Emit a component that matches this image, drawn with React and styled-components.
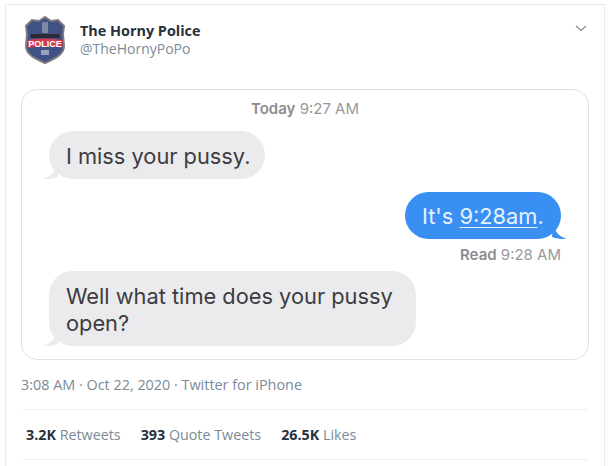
import React from "react";
import styled, { createGlobalStyle } from "styled-components";

const GlobalStyle = createGlobalStyle`
  html, body {
    margin: 0;
    padding: 0;
    background: #fff;
  }
`;

const Page = styled.div`
  width: 611px;
  height: 466px;
  box-sizing: border-box;
  padding: 4px 6px 0 5px;
  overflow: hidden;
  font-family: "Open Sans", "Noto Sans", sans-serif;
`;

const Frame = styled.div`
  height: 100%;
  box-sizing: border-box;
  border: 1px solid #e9ecee;
  border-bottom: none;
  padding: 0 15px 0 15px;
`;

const Header = styled.div`
  display: flex;
  align-items: flex-start;
  height: 84px;
  box-sizing: border-box;
  padding: 11px 0 0 4px;
`;

const Badge = styled.svg`
  width: 40px;
  height: 48px;
  flex: none;
`;

const Names = styled.div`
  margin: 5px 0 0 15px;
  flex: 1;
`;

const Name = styled.div`
  font-size: 14.4px;
  line-height: 19px;
  font-weight: 700;
  color: #27313c;
`;

const Handle = styled.div`
  font-size: 14px;
  line-height: 18px;
  color: #7c8b98;
`;

const Caret = styled.svg`
  width: 14px;
  height: 10px;
  margin: 7px 1px 0 0;
  flex: none;
`;

const Card = styled.div`
  height: 271px;
  box-sizing: border-box;
  border: 1px solid #dfe2e5;
  border-radius: 16px;
  padding: 9px 27px 0 27px;
  font-family: Inter, "Liberation Sans", sans-serif;
`;

const Stamp = styled.div`
  text-align: ${({ $align }) => $align};
  margin-top: ${({ $top }) => $top || 0}px;
  font-size: 15px;
  line-height: 20px;
  color: #98989d;
  b {
    font-weight: 600;
    color: #8b8b90;
  }
`;

const Row = styled.div`
  display: flex;
  justify-content: ${({ $mine }) => ($mine ? "flex-end" : "flex-start")};
  margin-top: ${({ $top }) => $top}px;
`;

const Bubble = styled.div`
  position: relative;
  box-sizing: border-box;
  width: ${({ $w }) => $w}px;
  padding: ${({ $mine }) => ($mine ? "11px 10px 9px 17px" : "12px 10px 9px 17px")};
  border-radius: 24px;
  font-size: 21.8px;
  line-height: 27px;
  background: ${({ $mine }) => ($mine ? "#3a8ff3" : "#ebebee")};
  color: ${({ $mine }) => ($mine ? "#e6f1ff" : "#3c3c41")};
  u {
    text-underline-offset: 3px;
    text-decoration-thickness: 1px;
  }
`;

const Tail = styled.svg`
  position: absolute;
  bottom: 0;
  width: 16px;
  height: 16px;
  ${({ $mine }) => ($mine ? "right: -6px;" : "left: -6px;")}
`;

const Meta = styled.div`
  margin-top: 15px;
  font-size: 14.4px;
  line-height: 19px;
  color: #7a8a97;
`;

const Stats = styled.div`
  display: flex;
  gap: 20px;
  margin: 15px 0 0 1px;
  height: 51px;
  box-sizing: border-box;
  align-items: center;
  padding-left: 4px;
  border-top: 1px solid #eef0f2;
  border-bottom: 1px solid #eef0f2;
  font-size: 14.3px;
  color: #7a8a97;
  b {
    color: #27313c;
    font-weight: 700;
  }
`;

const PoliceBadge = () => (
  <Badge viewBox="0 0 40 48">
    <path
      d="M20 1 L26 5 L33 4 L39 10 L38 18 L39 30 C39 39 29 43 20 47 C11 43 1 39 1 30 L2 18 L1 10 L7 4 L14 5 Z"
      fill="#3f5185"
      stroke="#7d7a80"
      strokeWidth="2"
    />
    <rect x="17" y="6" width="6" height="11" fill="#7f87a8" />
    <path d="M6 18 L34 18 L35 22 L5 22 Z" fill="#2c2a35" />
    <path d="M2 24 C14 22 26 22 38 24 L37 32 C26 30 14 30 3 32 Z" fill="#d43a52" />
    <text x="20" y="30.5" textAnchor="middle" fontSize="9" fontWeight="700" fill="#fff" fontFamily="Liberation Sans, sans-serif">
      POLICE
    </text>
    <rect x="16" y="34" width="8" height="5" fill="#9aa0ba" />
  </Badge>
);

const BubbleTail = ({ mine }) => (
  <Tail $mine={mine} viewBox="0 0 16 16">
    {mine ? (
      <path d="M2 2 C5 8 6 13 15.5 15.5 C10 16.5 5 15.5 1 14 Z" fill="#3a8ff3" />
    ) : (
      <path d="M14 2 C11 8 10 13 0.5 15.5 C6 16.5 11 15.5 15 14 Z" fill="#ebebee" />
    )}
  </Tail>
);

const App = () => {
  return (
    <Page>
      <GlobalStyle />
      <Frame>
        <Header>
          <PoliceBadge />
          <Names>
            <Name>The Horny Police</Name>
            <Handle>@TheHornyPoPo</Handle>
          </Names>
          <Caret viewBox="0 0 14 10">
            <path d="M2 3 L7 7.5 L12 3" fill="none" stroke="#7f8b95" strokeWidth="1.2" />
          </Caret>
        </Header>
        <Card>
          <Stamp $align="center">
            <b>Today</b> 9:27 AM
          </Stamp>
          <Row $top={12}>
            <Bubble $w={216}>
              I miss your pussy.
              <BubbleTail />
            </Bubble>
          </Row>
          <Row $mine $top={13}>
            <Bubble $mine $w={156}>
              It's <u>9:28am</u>.
              <BubbleTail mine />
            </Bubble>
          </Row>
          <Stamp $align="right" $top={6}>
            <b>Read</b> 9:28 AM
          </Stamp>
          <Row $top={6}>
            <Bubble $w={367}>
              Well what time does your pussy open?
              <BubbleTail />
            </Bubble>
          </Row>
        </Card>
        <Meta>3:08 AM · Oct 22, 2020 · Twitter for iPhone</Meta>
        <Stats>
          <span>
            <b>3.2K</b> Retweets
          </span>
          <span>
            <b>393</b> Quote Tweets
          </span>
          <span>
            <b>26.5K</b> Likes
          </span>
        </Stats>
      </Frame>
    </Page>
  );
};

export default App;
